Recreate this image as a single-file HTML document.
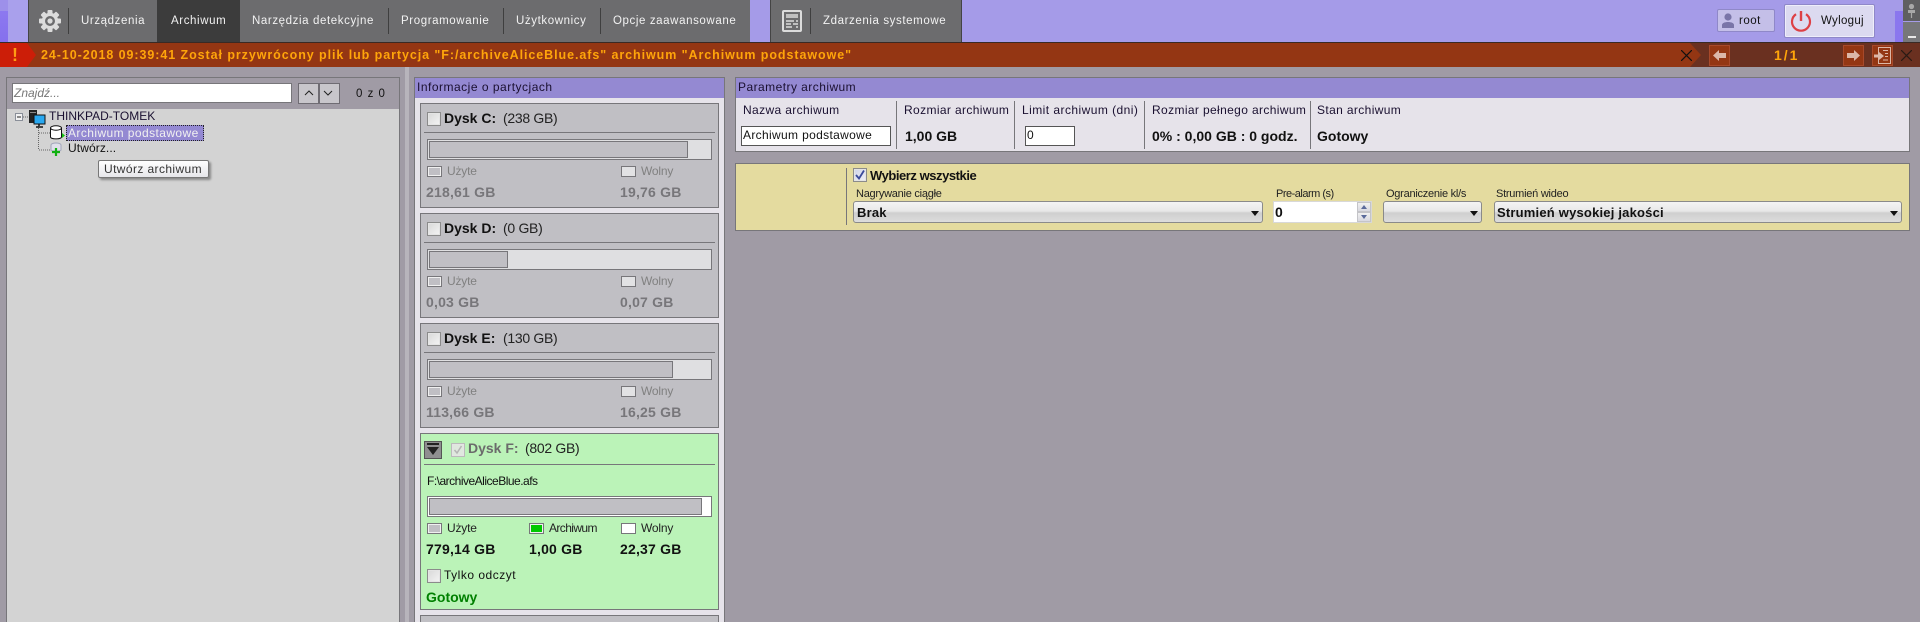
<!DOCTYPE html>
<html lang="pl"><head><meta charset="utf-8"><title>Archiwum</title>
<style>
html,body{margin:0;padding:0;width:1920px;height:622px;overflow:hidden;background:#a09ba5}
body{position:relative;font-family:"Liberation Sans",sans-serif;font-size:12px;color:#111}
div,span,svg{position:absolute;box-sizing:border-box}
.t{white-space:nowrap;line-height:14px}
.m{color:#f2f2f2;font-size:11.5px;top:14px;letter-spacing:.6px}
.sep{width:1px;background:#3f3f3f}
.card{left:420px;width:299px;background:#c0bfc4;border:1px solid #77767a}
.cb{width:14px;height:14px;background:linear-gradient(135deg,#d8d8d8,#f4f4f4);border:1px solid #8b8b8b;box-shadow:inset 0 0 0 1px #e4e4e4}
.bar{left:427px;width:285px;height:21px;background:#dfdfe1;border:1px solid #77767a}
.in{height:17px;background:#c0bfc4;border:1px solid #77767a;left:1px;top:1px}
.sw{width:15px;height:11px;border:1px solid #77767a;background:#e2e2e4}
.u{width:15px;height:11px;border:1px solid #77767a;box-shadow:inset 0 0 0 1px #f0f0f0;background:#c0bfc4}
.lg{color:#808080;font-size:12px;letter-spacing:-.2px}
.val{color:#77767a;font-weight:bold;font-size:14px;letter-spacing:.2px}
.dk{font-weight:bold;font-size:14px;color:#111}
.sz{font-size:14px;color:#222;letter-spacing:-.3px}
.l{height:1px;left:424px;width:291px;background:#77767a}
.h{font-size:12px;letter-spacing:.37px;color:#1a1030}
.combo{height:22px;top:201px;border:1px solid #8a8a8a;border-radius:3px;background:linear-gradient(#f4f4f4,#e8e8e8 45%,#cfcfcf 55%,#dcdcdc)}
.tri{width:0;height:0;border-left:4px solid transparent;border-right:4px solid transparent;border-top:5px solid #111}
.sm{font-size:11px;letter-spacing:-.25px;color:#222}
.nb{width:21px;height:21px;top:45px;background:#943613;border:1px solid #a8492a}
</style></head><body>

<!-- Top toolbar -->
<div style="left:0;top:0;width:1920px;height:42px;background:#a59be8"></div>
<div style="left:0;top:0;width:8px;height:42px;background:linear-gradient(#8f7cf0,#8570ee)"></div>
<div style="left:0;top:0;width:8px;height:11px;background:#9d90ea"></div>
<div style="left:8px;top:0;width:20px;height:42px;background:#a9a0ec"></div>
<div style="left:28px;top:0;width:722px;height:42px;background:#6c6c6e;border-left:1px solid #444"></div>
<div style="left:157px;top:0;width:83px;height:43px;background:#3c3c3c"></div>
<div style="left:770px;top:0;width:192px;height:42px;background:#6c6c6e;border-left:1px solid #444;border-right:1px solid #444"></div>
<div class="sep" style="left:68px;top:8px;height:26px"></div>
<div class="sep" style="left:388px;top:8px;height:26px"></div>
<div class="sep" style="left:503px;top:8px;height:26px"></div>
<div class="sep" style="left:600px;top:8px;height:26px"></div>
<div class="sep" style="left:810px;top:8px;height:26px"></div>

<svg style="left:38px;top:9px" width="24" height="24" viewBox="0 0 24 24">
<g fill="#dcdcdc"><rect x="9.5" y="1" width="5" height="22" rx="1"/><rect x="9.5" y="1" width="5" height="22" rx="1" transform="rotate(45 12 12)"/><rect x="9.5" y="1" width="5" height="22" rx="1" transform="rotate(90 12 12)"/><rect x="9.5" y="1" width="5" height="22" rx="1" transform="rotate(135 12 12)"/></g>
<circle cx="12" cy="12" r="8.2" fill="#dcdcdc"/><circle cx="12" cy="12" r="5" fill="#6c6c6e"/><circle cx="12" cy="12" r="2.6" fill="#dcdcdc"/></svg>
<svg style="left:782px;top:10px" width="20" height="22" viewBox="0 0 20 22">
<rect x="1" y="1" width="18" height="20" rx="1" fill="none" stroke="#dcdcdc" stroke-width="2"/>
<path d="M4 5h12M4 7h12M4 11h8M14 11h2M4 14h5M11 14h5M4 17h6M14 17h2" stroke="#dcdcdc" stroke-width="1.6"/></svg>

<span class="t m" style="left:81px">Urządzenia</span>
<span class="t m" style="left:171px">Archiwum</span>
<span class="t m" style="left:252px">Narzędzia detekcyjne</span>
<span class="t m" style="left:401px">Programowanie</span>
<span class="t m" style="left:516px">Użytkownicy</span>
<span class="t m" style="left:613px">Opcje zaawansowane</span>
<span class="t m" style="left:823px">Zdarzenia systemowe</span>

<!-- user / logout -->
<div style="left:1717px;top:9px;width:58px;height:23px;background:#c4bfe8;border:1px solid #8f88c8;border-radius:2px"></div>
<svg style="left:1721px;top:13px" width="14" height="15" viewBox="0 0 14 15"><circle cx="7" cy="4" r="3.6" fill="#7a75a8"/><path d="M1 15v-3c0-2 3-3 6-3s6 1 6 3v3z" fill="#7a75a8"/></svg>
<span class="t" style="left:1739px;top:14px;font-size:11.5px;letter-spacing:.5px;color:#111">root</span>
<div style="left:1784px;top:4px;width:91px;height:34px;background:#dcdaf0;border:1px solid #8f88c8;box-shadow:inset 0 0 0 1px #efeefa;border-radius:2px"></div>
<svg style="left:1790px;top:10px" width="22" height="22" viewBox="0 0 22 22"><path d="M6 4.2a9 9 0 1 0 10 0" fill="none" stroke="#dd4045" stroke-width="2.2"/><path d="M11 1v10" stroke="#dd4045" stroke-width="2.4"/></svg>
<span class="t" style="left:1821px;top:14px;font-size:11.5px;letter-spacing:.3px;color:#111">Wyloguj</span>
<div style="left:1895px;top:0;width:8px;height:42px;background:#8a76ee"></div>
<div style="left:1895px;top:0;width:8px;height:11px;background:#a59be8"></div>
<div style="left:1903px;top:0;width:17px;height:21px;background:#5f5f61"></div>
<div style="left:1903px;top:22px;width:17px;height:20px;background:#77777a"></div>
<svg style="left:1905px;top:3px" width="13" height="15" viewBox="0 0 13 15"><circle cx="6.5" cy="3.5" r="2.6" fill="#a8a8a8"/><path d="M3 7h7v3H3z" fill="#a8a8a8"/><path d="M6.5 10v5" stroke="#a8a8a8" stroke-width="1.2"/></svg>
<div style="left:1908px;top:36px;width:8px;height:2px;background:#e8e8e8"></div>

<!-- Notification bar -->
<div style="left:0;top:42px;width:1920px;height:1px;background:#3a2a24"></div>
<div style="left:0;top:43px;width:1920px;height:24px;background:#6a3020"></div>
<svg style="left:0;top:43px" width="1702" height="24"><polygon points="0,0 1690,0 1701,12 1690,24 0,24" fill="#943613"/><polygon points="0,0 27,0 36,12 27,24 0,24" fill="#cc1e08"/></svg>
<span class="t" style="left:12px;top:46px;font-size:18px;font-weight:bold;color:#ff9c14;line-height:18px">!</span>
<span class="t" style="left:41px;top:48px;font-size:12.5px;font-weight:bold;color:#ffa50a;letter-spacing:.93px">24-10-2018 09:39:41 Został przywrócony plik lub partycja "F:/archiveAliceBlue.afs" archiwum "Archiwum podstawowe"</span>
<svg style="left:1681px;top:50px" width="11" height="11"><path d="M0 0l11 11M11 0L0 11" stroke="#111" stroke-width="1.2"/></svg>
<div class="nb" style="left:1709px"></div>
<svg style="left:1713px;top:50px" width="13" height="11"><path d="M6 0v3h7v5H6v3L0 5.5z" fill="#dcb7a8"/></svg>
<span class="t" style="left:1774px;top:48px;font-size:14px;font-weight:bold;color:#ffa50a;letter-spacing:2px">1/1</span>
<div class="nb" style="left:1843px"></div>
<svg style="left:1847px;top:50px" width="13" height="11"><path d="M7 0v3H0v5h7v3l6-5.5z" fill="#dcb7a8"/></svg>
<div class="nb" style="left:1872px"></div>
<svg style="left:1874px;top:47px" width="17" height="17"><rect x="4.5" y=".5" width="12" height="16" fill="none" stroke="#dcb7a8"/><path d="M9 3.5h5M11 6.5h3M11 9.5h3M9 13h5" stroke="#dcb7a8"/><path d="M5 5v2.500H0v3h5V13l5-4z" fill="#dcb7a8"/></svg>
<svg style="left:1901px;top:50px" width="11" height="11"><path d="M0 0l11 11M11 0L0 11" stroke="#2a1a14" stroke-width="1.2"/></svg>

<!-- Left panel -->
<div style="left:6px;top:77px;width:394px;height:545px;background:#a09ba5;border:1px solid #77767a;border-bottom:0"></div>
<div style="left:7px;top:109px;width:392px;height:513px;background:#d3d3d3"></div>
<div style="left:405px;top:67px;width:4px;height:555px;background:#b7b4bb"></div>
<div style="left:12px;top:83px;width:280px;height:20px;background:#fff;border:1px solid #77767a"></div>
<span class="t" style="left:14px;top:86px;font-size:12px;font-style:italic;color:#777">Znajdź...</span>
<div style="left:298px;top:83px;width:21px;height:21px;background:#c8c6cb;border:1px solid #6f6c73"></div>
<div style="left:319px;top:83px;width:21px;height:21px;background:#c8c6cb;border:1px solid #6f6c73"></div>
<svg style="left:304px;top:90px" width="30" height="7"><path d="M1 5l4-4 4 4M20 1l4 4 4-4" fill="none" stroke="#222"/></svg>
<span class="t" style="left:356px;top:87px;font-size:11.5px;letter-spacing:1px;color:#111">0 z 0</span>

<!-- tree -->
<svg style="left:10px;top:105px" width="70" height="55">
<rect x="5.5" y="8.5" width="7" height="7" fill="#f2f2f2" stroke="#8a8f99"/><path d="M7 12h4" stroke="#222"/>
<path d="M13 12h6M28.500 21v24M29 28h11M29 45h11" stroke="#666" stroke-dasharray="1 1" fill="none"/>
<rect x="19" y="5" width="8" height="13" fill="#222"/><rect x="20" y="7" width="6" height="1" fill="#888"/>
<rect x="24" y="10" width="11" height="9" fill="#29a8f0" stroke="#111"/><path d="M29 19v2M26 22h7" stroke="#111" stroke-width="1.5"/>
<path d="M40.500 23v9c0 2.500 11 2.500 11 0v-9" fill="#fff" stroke="#111"/><ellipse cx="46" cy="23" rx="5.500" ry="2.200" fill="#fff" stroke="#111"/><path d="M52 28l3 2.500-3 2.500z" fill="#10c010"/>
<ellipse cx="46" cy="40" rx="5" ry="2" fill="#dfe0ea" stroke="#a0a4b8"/><path d="M41 40v5c0 1.500 10 1.500 10 0v-5" fill="#dfe0ea" stroke="#a0a4b8"/><path d="M46 43v8M42 47h8" stroke="#10b010" stroke-width="2.2"/>
</svg>
<span class="t" style="left:49px;top:109px;font-size:12px;letter-spacing:0;color:#1a1030">THINKPAD-TOMEK</span>
<div style="left:66px;top:125px;width:138px;height:16px;background:#9489d2;border:1px dotted #222"></div>
<span class="t" style="left:68px;top:126px;font-size:12px;letter-spacing:.42px;color:#f0f0f0">Archiwum podstawowe</span>
<span class="t" style="left:68px;top:141px;font-size:12px;letter-spacing:.1px;color:#111">Utwórz...</span>
<div style="left:98px;top:160px;width:111px;height:18px;background:linear-gradient(#fff,#e6e6ea);border:1px solid #777;border-radius:2px;box-shadow:2px 2px 2px #888"></div>
<span class="t" style="left:104px;top:162px;font-size:12px;letter-spacing:.4px;color:#333">Utwórz archiwum</span>

<!-- Partition panel -->
<div style="left:414px;top:77px;width:311px;height:545px;background:#e6e3ea;border:1px solid #77767a;border-bottom:0"></div>
<div style="left:415px;top:78px;width:309px;height:20px;background:#9489d2"></div>
<span class="t h" style="left:417px;top:80px;letter-spacing:.5px">Informacje o partycjach</span>

<!-- C -->
<div class="card" style="top:103px;height:105px"></div>
<div class="cb" style="left:427px;top:112px"></div>
<span class="t dk" style="left:444px;top:111px">Dysk C:</span><span class="t sz" style="left:503px;top:111px">(238 GB)</span>
<div class="l" style="top:132px"></div>
<div class="bar" style="top:139px"><div class="in" style="width:259px"></div></div>
<div class="u" style="left:427px;top:166px"></div><span class="t lg" style="left:447px;top:164px">Użyte</span>
<div class="sw" style="left:621px;top:166px"></div><span class="t lg" style="left:641px;top:164px">Wolny</span>
<span class="t val" style="left:426px;top:185px">218,61 GB</span><span class="t val" style="left:620px;top:185px">19,76 GB</span>

<!-- D -->
<div class="card" style="top:213px;height:105px"></div>
<div class="cb" style="left:427px;top:222px"></div>
<span class="t dk" style="left:444px;top:221px">Dysk D:</span><span class="t sz" style="left:503px;top:221px">(0 GB)</span>
<div class="l" style="top:242px"></div>
<div class="bar" style="top:249px"><div class="in" style="width:79px"></div></div>
<div class="u" style="left:427px;top:276px"></div><span class="t lg" style="left:447px;top:274px">Użyte</span>
<div class="sw" style="left:621px;top:276px"></div><span class="t lg" style="left:641px;top:274px">Wolny</span>
<span class="t val" style="left:426px;top:295px">0,03 GB</span><span class="t val" style="left:620px;top:295px">0,07 GB</span>

<!-- E -->
<div class="card" style="top:323px;height:105px"></div>
<div class="cb" style="left:427px;top:332px"></div>
<span class="t dk" style="left:444px;top:331px">Dysk E:</span><span class="t sz" style="left:503px;top:331px">(130 GB)</span>
<div class="l" style="top:352px"></div>
<div class="bar" style="top:359px"><div class="in" style="width:244px"></div></div>
<div class="u" style="left:427px;top:386px"></div><span class="t lg" style="left:447px;top:384px">Użyte</span>
<div class="sw" style="left:621px;top:386px"></div><span class="t lg" style="left:641px;top:384px">Wolny</span>
<span class="t val" style="left:426px;top:405px">113,66 GB</span><span class="t val" style="left:620px;top:405px">16,25 GB</span>

<!-- F -->
<div class="card" style="top:433px;height:177px;background:#bbf3b8"></div>
<div style="left:424px;top:441px;width:18px;height:18px;background:#8f8f90;border:1px solid #555"></div>
<svg style="left:426px;top:443px" width="14" height="14"><path d="M1 1h12" stroke="#222" stroke-width="2"/><path d="M1 4h12L7 12z" fill="#222"/></svg>
<div class="cb" style="left:451px;top:443px;border-color:#bbb;background:#dfe8de"></div>
<svg style="left:453px;top:445px" width="10" height="10"><path d="M1.5 5l2.500 3L8.500 1" fill="none" stroke="#b5b5b5" stroke-width="1.5"/></svg>
<span class="t dk" style="left:468px;top:441px;color:#6b6b6b">Dysk F:</span><span class="t sz" style="left:525px;top:441px">(802 GB)</span>
<div class="l" style="top:464px"></div>
<span class="t" style="left:427px;top:474px;font-size:12px;letter-spacing:-.5px;color:#111">F:\archiveAliceBlue.afs</span>
<div class="bar" style="top:496px;background:#fff"><div class="in" style="width:273px"></div></div>
<div class="u" style="left:427px;top:523px"></div><span class="t lg" style="left:447px;top:521px;color:#222">Użyte</span>
<div class="u" style="left:529px;top:523px;background:#00c800"></div><span class="t lg" style="left:549px;top:521px;color:#222;letter-spacing:-.6px">Archiwum</span>
<div class="sw" style="left:621px;top:523px;background:#fff"></div><span class="t lg" style="left:641px;top:521px;color:#222">Wolny</span>
<span class="t val" style="left:426px;top:542px;color:#111">779,14 GB</span><span class="t val" style="left:529px;top:542px;color:#111">1,00 GB</span><span class="t val" style="left:620px;top:542px;color:#111">22,37 GB</span>
<div class="cb" style="left:427px;top:569px"></div>
<span class="t" style="left:444px;top:568px;font-size:12px;letter-spacing:.5px;color:#111">Tylko odczyt</span>
<span class="t" style="left:426px;top:590px;font-size:14px;font-weight:bold;color:#008000">Gotowy</span>
<div class="card" style="top:615px;height:12px"></div>

<!-- Right params -->
<div style="left:735px;top:77px;width:1175px;height:75px;background:#e6e3ea;border:1px solid #77767a"></div>
<div style="left:736px;top:78px;width:1173px;height:20px;background:#9489d2"></div>
<span class="t h" style="left:738px;top:80px;letter-spacing:.45px">Parametry archiwum</span>
<div class="sep" style="left:896px;top:101px;height:48px;background:#77767a"></div>
<div class="sep" style="left:1014px;top:101px;height:48px;background:#77767a"></div>
<div class="sep" style="left:1144px;top:101px;height:48px;background:#77767a"></div>
<div class="sep" style="left:1310px;top:101px;height:48px;background:#77767a"></div>
<span class="t h" style="left:743px;top:103px">Nazwa archiwum</span>
<span class="t h" style="left:904px;top:103px">Rozmiar archiwum</span>
<span class="t h" style="left:1022px;top:103px;letter-spacing:.45px">Limit archiwum (dni)</span>
<span class="t h" style="left:1152px;top:103px">Rozmiar pełnego archiwum</span>
<span class="t h" style="left:1317px;top:103px">Stan archiwum</span>
<div style="left:741px;top:126px;width:150px;height:20px;background:#fff;border:1px solid #555"></div>
<span class="t" style="left:743px;top:128px;font-size:12px;letter-spacing:.34px;color:#111">Archiwum podstawowe</span>
<span class="t" style="left:905px;top:129px;font-size:14px;font-weight:bold;color:#111">1,00 GB</span>
<div style="left:1025px;top:126px;width:50px;height:20px;background:#fff;border:1px solid #555"></div>
<span class="t" style="left:1027px;top:128px;font-size:12px;color:#111">0</span>
<span class="t" style="left:1152px;top:129px;font-size:14px;font-weight:bold;color:#111">0% : 0,00 GB : 0 godz.</span>
<span class="t" style="left:1317px;top:129px;font-size:14px;font-weight:bold;color:#111">Gotowy</span>

<!-- Yellow -->
<div style="left:735px;top:163px;width:1175px;height:68px;background:#e4db9f;border:1px solid #77767a"></div>
<div class="sep" style="left:846px;top:168px;height:57px;background:#77767a"></div>
<div class="cb" style="left:853px;top:168px;background:linear-gradient(135deg,#cfd3e6,#f0f0f6)"></div>
<svg style="left:855px;top:170px" width="10" height="10"><path d="M1 5l3 3.500L9 .5" fill="none" stroke="#3a4a9a" stroke-width="1.8"/></svg>
<span class="t" style="left:870px;top:169px;font-size:13px;font-weight:bold;color:#111;letter-spacing:-.45px">Wybierz wszystkie</span>
<span class="t sm" style="left:856px;top:187px">Nagrywanie ciągłe</span>
<span class="t sm" style="left:1276px;top:187px;letter-spacing:-.5px">Pre-alarm (s)</span>
<span class="t sm" style="left:1386px;top:187px">Ograniczenie kl/s</span>
<span class="t sm" style="left:1496px;top:187px">Strumień wideo</span>
<div class="combo" style="left:853px;width:410px"></div>
<span class="t" style="left:857px;top:206px;font-size:13px;font-weight:bold;color:#111;letter-spacing:.2px">Brak</span>
<div class="tri" style="left:1251px;top:211px"></div>
<div style="left:1273px;top:201px;width:99px;height:22px;background:#fff;border:1px solid #d8d8d8"></div>
<span class="t" style="left:1275px;top:205px;font-size:14px;font-weight:bold;color:#111">0</span>
<div style="left:1357px;top:202px;width:14px;height:10px;background:linear-gradient(#f0f0f0,#d8d8e0);border:1px solid #c4c4c8"></div>
<div style="left:1357px;top:212px;width:14px;height:10px;background:linear-gradient(#f0f0f0,#d8d8e0);border:1px solid #c4c4c8"></div>
<svg style="left:1360px;top:204px" width="8" height="16"><path d="M4 1l3 4H1zM1 11h6l-3 4z" fill="#5a6a9a"/></svg>
<div class="combo" style="left:1383px;width:99px"></div>
<div class="tri" style="left:1470px;top:211px"></div>
<div class="combo" style="left:1494px;width:408px"></div>
<span class="t" style="left:1497px;top:206px;font-size:13px;font-weight:bold;color:#111;letter-spacing:.2px">Strumień wysokiej jakości</span>
<div class="tri" style="left:1890px;top:211px"></div>
</body></html>
